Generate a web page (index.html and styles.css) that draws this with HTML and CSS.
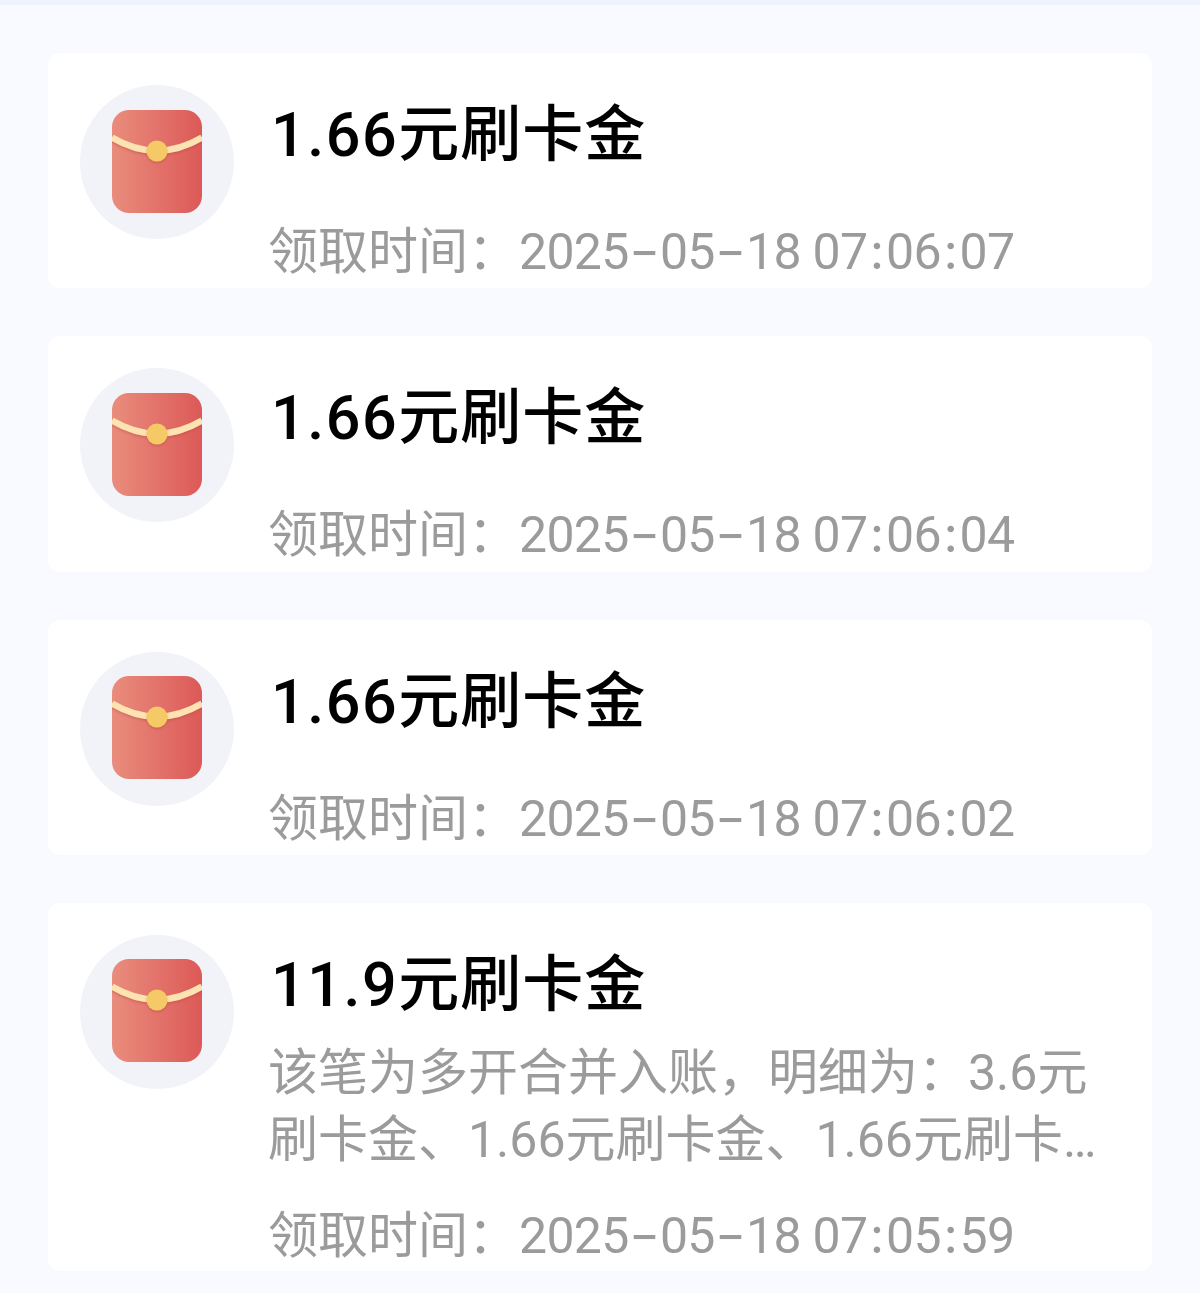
FILE: index.html
```html
<!DOCTYPE html>
<html lang="zh-CN">
<head>
<meta charset="utf-8">
<title>刷卡金</title>
<link rel="stylesheet" href="styles.css">
</head>
<body>
<svg class="defs" width="0" height="0" aria-hidden="true">
  <defs>
    <linearGradient id="env" x1="0" y1="0" x2="1" y2="0">
      <stop offset="0" stop-color="#e98d7d"/>
      <stop offset="1" stop-color="#dc5958"/>
    </linearGradient>
    <filter id="soft" x="-40%" y="-40%" width="180%" height="180%">
      <feDropShadow dx="0" dy="1.5" stdDeviation="1.2" flood-color="#b8403a" flood-opacity="0.45"/>
    </filter>
    <symbol id="packet" viewBox="0 0 90 103">
      <rect width="90" height="103" rx="17" fill="url(#env)"/>
      <path d="M0 27.5 Q45 54 90 27.5" fill="none" stroke="#fde3b1" stroke-width="6.5" filter="url(#soft)"/>
      <circle cx="45" cy="41" r="10.5" fill="#f5ca66" filter="url(#soft)"/>
    </symbol>
  </defs>
</svg>
<main class="list">
  <article class="card">
    <div class="avatar"><svg class="packet"><use href="#packet"/></svg></div>
    <div class="body">
      <h2 class="title"><span class="amt">1.66</span>元刷卡金</h2>
      <p class="time">领取时间：<span class="date">2025<span class="dash">-</span>05<span class="dash">-</span>18 07<span class="colon">:</span>06<span class="colon">:</span>07</span></p>
    </div>
  </article>
  <article class="card">
    <div class="avatar"><svg class="packet"><use href="#packet"/></svg></div>
    <div class="body">
      <h2 class="title"><span class="amt">1.66</span>元刷卡金</h2>
      <p class="time">领取时间：<span class="date">2025<span class="dash">-</span>05<span class="dash">-</span>18 07<span class="colon">:</span>06<span class="colon">:</span>04</span></p>
    </div>
  </article>
  <article class="card">
    <div class="avatar"><svg class="packet"><use href="#packet"/></svg></div>
    <div class="body">
      <h2 class="title"><span class="amt">1.66</span>元刷卡金</h2>
      <p class="time">领取时间：<span class="date">2025<span class="dash">-</span>05<span class="dash">-</span>18 07<span class="colon">:</span>06<span class="colon">:</span>02</span></p>
    </div>
  </article>
  <article class="card">
    <div class="avatar"><svg class="packet"><use href="#packet"/></svg></div>
    <div class="body">
      <h2 class="title"><span class="amt">11.9</span>元刷卡金</h2>
      <p class="desc">该笔为多开合并入账，明细为：3.6元刷卡金、1.66元刷卡金、1.66元刷卡…</p>
      <p class="time">领取时间：<span class="date">2025<span class="dash">-</span>05<span class="dash">-</span>18 07<span class="colon">:</span>05<span class="colon">:</span>59</span></p>
    </div>
  </article>
</main>
</body>
</html>
```
FILE: styles.css
```css
* { box-sizing: border-box; }
html, body { margin: 0; padding: 0; }
body {
  height: 1293px;
  overflow: hidden;
  background: #f8faff;
  border-top: 5px solid #eef3fd;
  font-family: Roboto, "Noto Sans CJK SC", sans-serif;
}
.defs { display: block; height: 0; }
.list {
  display: flex;
  flex-direction: column;
  gap: 48px;
  padding: 48px 48px 0;
}
.card {
  display: flex;
  gap: 34px;
  padding: 32px 52px 1px 32px;
  min-height: 235.33px;
  background: #fff;
  border-radius: 12px;
}
.avatar {
  flex: none;
  display: flex;
  align-items: center;
  justify-content: center;
  width: 154px;
  height: 154px;
  border-radius: 50%;
  background: #f1f3f8;
}
.packet { display: block; width: 90px; height: 103px; margin-bottom: 2px; }
.body {
  flex: 1;
  min-width: 0;
  display: flex;
  flex-direction: column;
}
.title {
  margin: 0 0 7px;
  padding: 2px 0 0 3px;
  font-size: 61px;
  font-weight: 500;
  line-height: 96px;
  letter-spacing: 1px;
  color: #000;
}
.amt { letter-spacing: 1.6px; }
.desc {
  margin: 0;
  font-size: 50px;
  line-height: 67px;
  color: #9b9b9b;
}
.time {
  margin: 29px 0 0;
  font-size: 50px;
  line-height: 67px;
  height: 67px;
  color: #9b9b9b;
  white-space: nowrap;
}
.date {
  margin-left: 1px;
  letter-spacing: -0.7px;
}
.dash {
  display: inline-block;
  font-family: Inter, sans-serif;
  line-height: 1;
  margin: 0 4.5px;
  transform: scaleX(1.35);
}
.colon {
  display: inline-block;
  font-family: Inter, sans-serif;
  line-height: 1;
  margin: 0 2.5px;
}
```
